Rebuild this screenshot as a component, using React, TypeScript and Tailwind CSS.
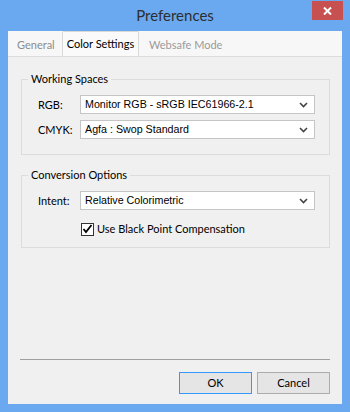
import React from "react";

const ui = { fontFamily: 'Lato, "Noto Sans", sans-serif' };
const tahoma = { fontFamily: '"Liberation Sans", Arial, sans-serif' };

const Chevron = () => (
  <svg width="9" height="6" viewBox="0 0 9 6" className="shrink-0">
    <path d="M1 1 L4.5 4.5 L8 1" fill="none" stroke="#444" strokeWidth="1.6" />
  </svg>
);

const Select = ({ value }: { value: string }) => (
  <div
    className="flex h-[19px] flex-1 items-center justify-between border border-[#c5c5c5] bg-white pl-[4px] pr-[6px] text-[10.7px] text-black"
    style={tahoma}
  >
    <span className="leading-none">{value}</span>
    <Chevron />
  </div>
);

const Row = ({ label, value }: { label: string; value: string }) => (
  <div className="flex items-center">
    <span className="w-[42px] whitespace-nowrap text-[11px] leading-4 text-black">{label}</span>
    <Select value={value} />
  </div>
);

export default function App() {
  return (
    <div className="flex h-[412px] w-[350px] flex-col bg-[#6aa9f0]" style={ui}>
      {/* title bar */}
      <div className="relative flex h-[31px] items-center justify-center">
        <span className="text-[15px] leading-none text-[#2e2e2e]">Preferences</span>
        <div className="absolute right-[7px] top-[1px] flex h-[19px] w-[31px] items-center justify-center bg-[#c75050]">
          <svg width="9" height="8" viewBox="0 0 9 8">
            <path d="M1 0.5 L8 7.5 M8 0.5 L1 7.5" stroke="#fff" strokeWidth="2" />
          </svg>
        </div>
      </div>

      {/* client area */}
      <div className="mx-[8px] mb-[8px] flex flex-1 flex-col bg-[#f0f0f0]">
        {/* tab strip */}
        <div className="flex h-[26px] items-end whitespace-nowrap border-b border-[#dcdcdc] bg-[#f7f7f7] pl-[9px] text-[11px]">
          <div className="flex h-[22px] w-[45px] items-center text-[#8c8c8c]">General</div>
          <div className="flex h-[25px] w-[77px] items-center justify-center rounded-t-[2px] border border-b-0 border-[#d9d9d9] bg-[#fafafa] text-black">
            Color Settings
          </div>
          <div className="flex h-[22px] items-center pl-[10px] text-[#9a9a9a]">Websafe Mode</div>
        </div>

        {/* panel */}
        <div className="flex flex-1 flex-col pl-[13px] pr-[12px]">
          <fieldset className="mt-[14px] border border-[#dcdcdc] pb-[15px] pl-[16px] pr-[14px]">
            <legend className="ml-[-10px] px-[3px] text-[11px] leading-4 text-black">Working Spaces</legend>
            <div className="mt-[8px] flex flex-col gap-[6px]">
              <Row label="RGB:" value="Monitor RGB - sRGB IEC61966-2.1" />
              <Row label="CMYK:" value="Agfa : Swop Standard" />
            </div>
          </fieldset>

          <fieldset className="mt-[12px] border border-[#dcdcdc] pb-[10px] pl-[16px] pr-[14px]">
            <legend className="ml-[-10px] px-[3px] text-[11px] leading-4 text-black">Conversion Options</legend>
            <div className="mt-[8px] flex flex-col gap-[11px]">
              <Row label="Intent:" value="Relative Colorimetric" />
              <div className="flex items-center pl-[43px]">
                <div className="flex h-[13px] w-[13px] items-center justify-center border border-[#333] bg-white">
                  <svg width="11" height="10" viewBox="0 0 11 10">
                    <path d="M1.5 5 L4 8 L9.5 1" fill="none" stroke="#000" strokeWidth="1.8" />
                  </svg>
                </div>
                <span className="pl-[3px] text-[11px] leading-4 text-black">Use Black Point Compensation</span>
              </div>
            </div>
          </fieldset>

          <div className="flex-1" />

          <div className="ml-[-1px] h-px bg-[#a0a0a0]" />
          <div className="flex justify-end gap-[5px] pb-[10px] pt-[12px]">
            <button className="h-[22px] w-[73px] border border-[#3399ff] bg-[#e5e5e5] text-[11px] text-black">OK</button>
            <button className="h-[22px] w-[73px] border border-[#acacac] bg-[#e5e5e5] text-[11px] text-black">Cancel</button>
          </div>
        </div>
      </div>
    </div>
  );
}
